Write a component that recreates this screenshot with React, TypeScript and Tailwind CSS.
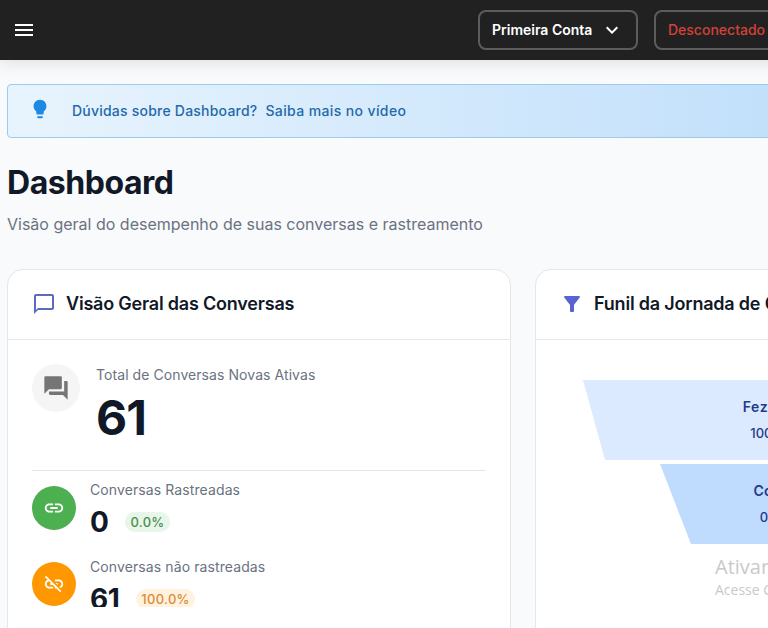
import { MdChatBubbleOutline, MdExpandMore, MdFilterAlt, MdForum, MdLightbulb, MdLink, MdLinkOff, MdMenu } from "react-icons/md";

const App = () => {
  return (
    <div className="h-[628px] w-[768px] overflow-hidden bg-[#f8fafc] font-['Inter',sans-serif] relative">
      {/* HEADER */}
      <header className="h-[60px] w-[1200px] bg-[#212121] flex items-center pl-3 shadow-[0_2px_16px_rgba(0,0,0,0.12)] relative">
        <MdMenu className="text-white" size={24} />
        <div className="flex items-center gap-4 ml-[442px]">
          <button className="w-[160px] h-10 px-3 border-2 border-[#5c5c5c] rounded-lg flex items-center justify-between text-white text-sm font-semibold">
            Primeira Conta
            <MdExpandMore size={24} />
          </button>
          <button className="w-[140px] h-10 px-3 border-2 border-[#5c5c5c] rounded-lg flex items-center text-[#d2413a] text-sm font-medium">
            Desconectado
          </button>
        </div>
      </header>

      <main className="w-[1032px] ml-[7px] pt-6">
        {/* ALERT */}
        <div className="h-[54px] rounded border border-[#9ccbeb] bg-gradient-to-r from-[#e8f4fd] to-[#b5d9fa] flex items-center pl-[21px] text-sm font-medium text-[#1f69ab] tracking-[0.22px]">
          <MdLightbulb className="text-[#1e88e5] mr-[21px] -mt-1" size={22} />
          <span>Dúvidas sobre Dashboard?</span>
          <span className="ml-2 tracking-[0.38px]">Saiba mais no vídeo</span>
        </div>

        <h1 className="mt-[25px] text-[32px] leading-10 font-bold text-[#111827] tracking-[-0.45px]">Dashboard</h1>
        <p className="mt-[9px] text-base leading-6 text-[#6b7280]">Visão geral do desempenho de suas conversas e rastreamento</p>

        <div className="mt-[33px] grid grid-cols-2 gap-6">
          {/* LEFT */}
          <section className="h-[500px] bg-white rounded-2xl border border-[#e5e7eb]">
            <div className="h-[70px] pb-0.5 border-b border-[#e5e7eb] flex items-center pl-6 gap-[10px]">
              <MdChatBubbleOutline className="text-[#5c6bc0]" size={24} />
              <h2 className="text-lg font-semibold text-[#111827] tracking-[-0.2px]">Visão Geral das Conversas</h2>
            </div>
            <div className="px-6 pt-6">
              <div className="flex gap-4 h-[106px]">
                <div className="w-12 h-12 rounded-full bg-[#f5f5f5] flex items-center justify-center text-[#757575]">
                  <MdForum size={28} />
                </div>
                <div>
                  <div className="text-sm leading-5 text-[#6b7280] tracking-[0.07px] mt-px">Total de Conversas Novas Ativas</div>
                  <div className="text-5xl leading-[60px] font-bold text-[#111827] mt-[3px] tracking-[-1px]">61</div>
                </div>
              </div>
              <div className="border-t border-[#e5e7eb] pt-[15px] h-[137px] overflow-hidden flex flex-col gap-8">
                <div className="flex gap-[14px] h-11">
                  <div className="w-11 h-11 rounded-full bg-[#4caf50] flex items-center justify-center text-white">
                    <MdLink size={22} />
                  </div>
                  <div className="-mt-1.5">
                    <div className="text-sm leading-5 text-[#6b7280] tracking-[0.1px]">Conversas Rastreadas</div>
                    <div className="flex items-center gap-[17px] mt-1.5">
                      <span className="text-[28px] leading-8 font-bold text-[#111827] tracking-[-0.5px]">0</span>
                      <span className="h-5 px-[5px] rounded-full bg-[#e8f5e9] text-[#4a8f50] text-[13px] leading-5 font-medium tracking-[0.3px]">0.0%</span>
                    </div>
                  </div>
                </div>
                <div className="flex gap-[14px] h-11">
                  <div className="w-11 h-11 rounded-full bg-[#ff9800] flex items-center justify-center text-white">
                    <MdLinkOff size={22} />
                  </div>
                  <div className="-mt-[5px]">
                    <div className="text-sm leading-5 text-[#6b7280] tracking-[0.1px]">Conversas não rastreadas</div>
                    <div className="flex items-center gap-[17px] mt-1.5">
                      <span className="text-[28px] leading-8 font-bold text-[#111827] tracking-[-0.5px]">61</span>
                      <span className="h-5 px-[5px] rounded-full bg-[#fff3e0] text-[#dc8a35] text-[13px] leading-5 font-medium tracking-[0.3px]">100.0%</span>
                    </div>
                  </div>
                </div>
              </div>
            </div>
          </section>

          {/* RIGHT */}
          <section className="h-[500px] bg-white rounded-2xl border border-[#e5e7eb]">
            <div className="h-[70px] pb-0.5 border-b border-[#e5e7eb] flex items-center pl-6 gap-[10px]">
              <MdFilterAlt className="text-[#5a64d0]" size={24} />
              <h2 className="text-lg font-semibold text-[#111827] whitespace-nowrap tracking-[-0.2px]">Funil da Jornada de Conversão</h2>
            </div>
            <div className="pt-10 flex flex-col items-center gap-1">
              <div className="w-[408px] h-20 bg-[#dbeafe] [clip-path:polygon(0_0,100%_0,94.6%_100%,5.4%_100%)] flex flex-col items-center justify-center text-[#1e3a8a]">
                <div className="text-sm font-semibold leading-5 tracking-[0.7px]">Fez Contato</div>
                <div className="text-[13px] leading-5 mt-1.5 font-medium">100.0% (61)</div>
              </div>
              <div className="w-[254px] h-20 bg-[#bfdbfe] [clip-path:polygon(0_0,100%_0,87.8%_100%,12.2%_100%)] flex flex-col items-center justify-center text-[#1e3a8a]">
                <div className="text-sm font-semibold leading-5 tracking-[0.3px]">Conversa</div>
                <div className="text-[13px] leading-5 mt-1.5 font-medium">0.0% (0)</div>
              </div>
            </div>
          </section>
        </div>
      </main>

      {/* windows watermark */}
      <div className="absolute left-[715px] top-[555px] w-[300px] font-['Open_Sans',sans-serif] text-[#c9c9c9] pointer-events-none">
        <div className="text-xl leading-6">Ativar o Windows</div>
        <div className="text-sm leading-5 mt-px">Acesse Configurações</div>
      </div>
    </div>
  );
};

export default App;
